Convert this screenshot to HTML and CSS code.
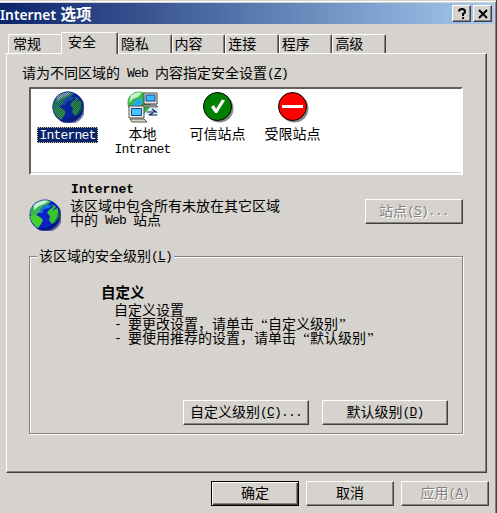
FILE: index.html
```
<!DOCTYPE html>
<html lang="zh-CN">
<head>
<meta charset="utf-8">
<title>Internet 选项</title>
<link rel="stylesheet" href="styles.css">
</head>
<body>
<svg width="0" height="0" class="defs">
  <defs>
    <pattern id="dither" width="2" height="2" patternUnits="userSpaceOnUse"><rect width="1" height="1" fill="#0a246a"/><rect x="1" y="1" width="1" height="1" fill="#0a246a"/></pattern>
    <symbol id="globe" viewBox="0 0 32 32">
      <circle cx="16" cy="16" r="15.5" fill="#0b22c4"/>
      <path d="M2 10Q7 1 16 1L22 2 20 5 15 7 12 10 11 13 8 15 7 19 3 18 1 15Z" fill="#38b450"/>
      <path d="M1 17L7 16 11 18 14 21 12 25 9 29Q2 25 1 17Z" fill="#45d02c"/>
      <path d="M23 12L28 9Q31 13 31 18L27 23 23 25 20 21 21 17 18 14 20 11 24 8 23 5 27 8Z" fill="#38c430"/>
      <path d="M5 6Q12 0 20 2L15 5 10 7 5 11Z" fill="#c8eed8"/>
      <path d="M12 10L17 6 23 6 20 9 15 10 13 14 10 14Z" fill="#1c70e8"/>
      <path d="M28 6A15.5 15.5 0 0 1 7 29Q20 30 26 22 31 15 28 6Z" fill="#001060" opacity=".55"/>
    </symbol>
  </defs>
</svg>
<div class="window">
  <header class="titlebar">
    <h1><span class="title-latin">Internet</span> 选项</h1>
    <button class="cap" aria-label="?"><svg width="12" height="12"><path d="M3 3.5Q3 1 6 1T9 3.5Q9 5 7 6V8M7 9.3V11" fill="none" stroke="#000" stroke-width="2"/></svg></button>
    <button class="cap" aria-label="x"><svg width="12" height="12"><path d="M2 2L10 10M10 2L2 10" stroke="#000" stroke-width="2"/></svg></button>
  </header>
  <nav class="tabs">
    <span class="tab first">常规</span><span class="tab active">安全</span><span class="tab">隐私</span><span class="tab">内容</span><span class="tab">连接</span><span class="tab">程序</span><span class="tab">高级</span>
  </nav>
  <main class="panel">
    <p class="prompt">请为不同区域的<i> Web </i>内容指定安全设置<i>(<u>Z</u>)</i></p>
    <div class="zones">
      <div class="zone">
        <svg class="icon" width="32" height="32"><use href="#globe"/><circle cx="16" cy="16" r="15.5" fill="#0a246a" opacity=".3"/><circle cx="16" cy="16" r="15.5" fill="url(#dither)" opacity=".5"/></svg>
        <span class="selected"><i>Internet</i></span>
      </div>
      <div class="zone">
        <svg class="icon" width="32" height="32" viewBox="0 0 32 32">
          <circle cx="12" cy="12" r="11.5" fill="#38b848"/>
          <path d="M4 4Q10 0 15 2L11 6 6 8 2 12Z" fill="#c8f0c8"/>
          <path d="M5 14L9 9 14 7 16 11 13 15 17 19 13 22 5 20Z" fill="#28a8e8"/>
          <path d="M17 2H30V13H17Z" fill="#e8e4d4" stroke="#444"/><path d="M19 4H28V10H19Z" fill="#38b8ff" stroke="#124890"/>
          <path d="M15 14H29L31 16H17Z" fill="#bbb" stroke="#333" stroke-width=".7"/>
          <path d="M2 15H17V27H2Z" fill="#eeeade" stroke="#555"/><path d="M4.500 17.500H14.500V24.500H4.500Z" fill="#48c4ff" stroke="#124890"/>
          <path d="M3 28H17L20 31H5Z" fill="#ddd8c8" stroke="#333" stroke-width=".8"/>
          <path d="M18 22L23 17H31V25H21Z" fill="#d8f0ff"/><path d="M20 21H29L25 18M30 24H22L26 22" fill="none" stroke="#102050" stroke-width="1.2"/>
        </svg>
        <span>本地</span><span><i>Intranet</i></span>
      </div>
      <div class="zone">
        <svg class="icon" width="32" height="32"><circle cx="17.500" cy="17.500" r="14" fill="#888"/><circle cx="15.500" cy="15.500" r="14" fill="#008000" stroke="#000"/><path d="M9 16L12 14 14 18 20 8.500 23 9.500 15 22H13Z" fill="#fff"/></svg>
        <span>可信站点</span>
      </div>
      <div class="zone">
        <svg class="icon" width="32" height="32"><circle cx="17.500" cy="17.500" r="14" fill="#888"/><circle cx="15.500" cy="15.500" r="14" fill="#f00" stroke="#000"/><path d="M5 14H26V17H5Z" fill="#fff"/></svg>
        <span>受限站点</span>
      </div>
    </div>
    <section class="info">
      <svg class="info-icon" width="32" height="32"><use href="#globe"/></svg>
      <div class="info-text"><b><i>Internet</i></b><p>该区域中包含所有未放在其它区域<br>中的<i> Web </i>站点</p></div>
      <button class="btn sites" disabled><span>站点<i>(<u>S</u>)...</i></span></button>
    </section>
    <fieldset class="level">
      <legend>该区域的安全级别<i>(<u>L</u>)</i></legend>
      <h2>自定义</h2>
      <p class="desc">自定义设置<br><i>- </i>要更改设置，请单击<q>自定义级别</q><br><i>- </i>要使用推荐的设置，请单击<q>默认级别</q></p>
      <div class="level-actions">
        <button class="btn">自定义级别<i>(<u>C</u>)...</i></button>
        <button class="btn">默认级别<i>(<u>D</u>)</i></button>
      </div>
    </fieldset>
  </main>
  <footer class="actions">
    <button class="btn default">确定</button>
    <button class="btn">取消</button>
    <button class="btn" disabled><span>应用<i>(<u>A</u>)</i></span></button>
  </footer>
</div>
</body>
</html>
```
FILE: styles.css
```
* { box-sizing: border-box; }
body, h1, h2, p { margin: 0; }
body {
  background: #d6d3ce;
  color: #000;
  font: 14px/14px "Noto Sans CJK SC", sans-serif;
  overflow: hidden;
}
.defs { position: absolute; }
i {
  font: 13px/0 "Liberation Mono", monospace;
  letter-spacing: -0.8px;
  vertical-align: 1px;
  white-space: pre;
}
u { text-underline-offset: 1px; }

.window {
  width: 497px;
  height: 513px;
  padding-top: 3px;
  border-right: 1px solid #404040;
  box-shadow: inset 0 1px #d6d3ce, inset 0 2px #fff, inset -1px 0 #848284;
}
.titlebar {
  display: flex;
  align-items: center;
  width: 494px;
  height: 21px;
  padding-right: 2px;
  background: linear-gradient(90deg, #0a246a, #a6caf0);
}
h1 {
  flex: 1;
  color: #fff;
  font-size: 15.5px;
  line-height: 18px;
  height: 20px;
  font-weight: 700;
  white-space: nowrap;
}
.title-latin { margin-right: 1px; font: 600 13.8px/18px "Noto Sans", sans-serif; }
.cap {
  display: grid;
  place-items: center;
  width: 19px;
  height: 17px;
  margin-left: 2px;
  padding: 0;
  background: #d6d3ce;
  border: 1px solid;
  border-color: #fff #404040 #404040 #fff;
  box-shadow: inset -1px -1px #848284;
}

.tabs {
  display: flex;
  align-items: flex-end;
  height: 29px;
  padding-left: 8px;
}
.tab {
  width: 53.6px;
  height: 19px;
  padding: 1px 0 0 2px;
  border: 1px solid #fff;
  border-right-color: #404040;
  border-bottom: 0;
  border-radius: 2px 2px 0 0;
  box-shadow: inset -1px 0 #848284;
}
.tab.first { width: 53px; padding-left: 4px; border-right: 0; box-shadow: none; }
.tab.active {
  position: relative;
  width: 57px;
  height: 22px;
  margin-bottom: -1px;
  padding: 1px 0 0 6px;
  background: #d6d3ce;
}

.panel {
  width: 481px;
  height: 420px;
  margin-left: 6px;
  padding: 11px 22px 0;
  border: 1px solid;
  border-color: #fff #404040 #404040 #fff;
  box-shadow: inset -1px -1px #848284;
}
.prompt { margin-left: -7px; height: 22px; white-space: nowrap; }
.zones {
  display: flex;
  width: 434px;
  height: 88px;
  background: #fff;
  border: 2px solid;
  border-color: #606060 #fff #fff #606060;
  box-shadow: inset 0 -1px #d6d3ce;
}
.zone {
  display: flex;
  flex-direction: column;
  align-items: center;
  width: 75px;
  padding-top: 2px;
}
.zone:first-child { margin-left: -1px; }
.zone span { line-height: 15px; height: 15px; }
.icon { margin-bottom: 3px; }
.zone .selected {
  height: 16px;
  margin-top: 1px;
  padding: 0 2px;
  color: #fff;
  background: #0a246a;
  outline: 1px dotted #d8c878;
  outline-offset: -1px;
}
.info { display: flex; height: 74px; padding-top: 5px; }
.info-icon { margin-top: 19px; }
.info-text { width: 303px; padding-left: 9px; }
.info-text b { display: block; height: 17px; margin-top: 1px; padding-left: 1px; }
.info-text b i { font-weight: 700; letter-spacing: 0.1px; }
.info-text p { white-space: nowrap; }

.btn {
  flex: none;
  height: 25px;
  padding: 0 0 3px;
  background: #d6d3ce;
  color: #000;
  border: 1px solid;
  border-color: #fff #404040 #404040 #fff;
  box-shadow: inset -1px -1px #848284;
  font: inherit;
  white-space: nowrap;
}
.btn:disabled { color: #848284; text-shadow: 1px 1px #fff; }
.btn.default {
  border-color: #000;
  box-shadow: inset 1px 1px #fff, inset -1px -1px #404040, inset -2px -2px #848284;
}
.sites { width: 98px; margin: 19px -8px 0 1px; }

.level {
  width: 434px;
  height: 185px;
  min-width: 0;
  margin: 0;
  padding: 0;
  border: 1px solid #848284;
  box-shadow: 1px 1px #fff, inset 1px 1px #fff;
}
.level legend {
  height: 14px;
  margin-left: 7px;
  padding: 0 2px;
  background: #d6d3ce;
  line-height: 12px;
  white-space: nowrap;
}
h2 { margin: 21px 0 0 71px; font-size: 14.500px; line-height: 16px; }
.desc { margin: 2px 0 0 84px; white-space: nowrap; }
.desc q { quotes: none; }
.desc q::before, .desc q::after {
  display: inline-block;
  width: 14px;
  height: 10px;
  font: 15px/10px "Liberation Serif", serif;
}
.desc q::before { content: "“"; text-align: right; }
.desc q::after { content: "”"; padding-left: 1px; }
.level-actions { display: flex; gap: 13px; margin: 56px 0 0 153px; }
.level-actions .btn { width: 126px; }
.actions { display: flex; gap: 7px; padding: 8px 0 0 211px; }
.actions .btn { width: 88px; }
```
